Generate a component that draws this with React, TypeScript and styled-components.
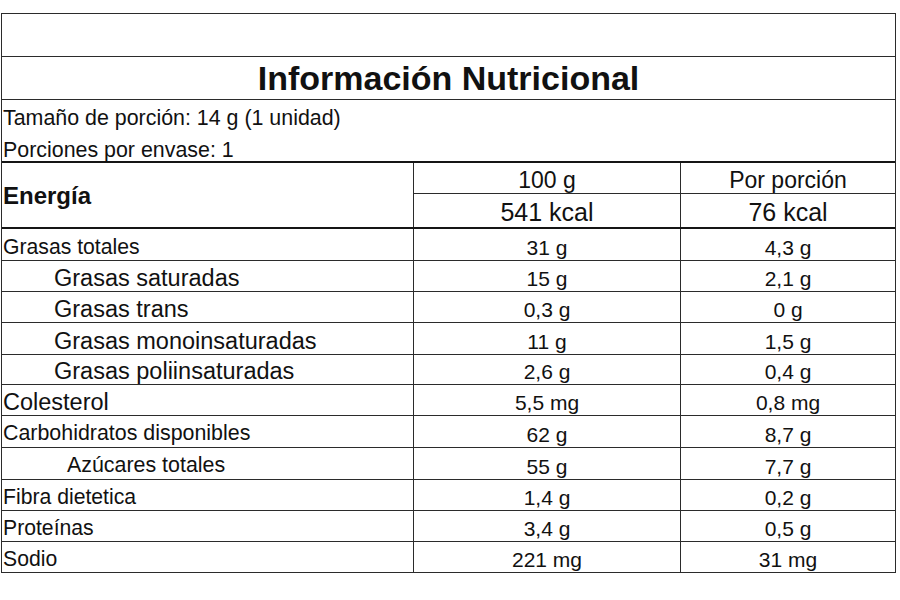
import React from "react";
import styled, { createGlobalStyle } from "styled-components";

const Global = createGlobalStyle`
  *, *::before, *::after { box-sizing: border-box; }
  html, body { margin: 0; padding: 0; background: #ffffff; }
  body { font-family: "Liberation Sans", Arial, Helvetica, sans-serif; color: #111; }
`;

const Page = styled.div`
  padding: 13px 0 0 1px;
`;

const Label = styled.div`
  width: 895px;
  border: 1px solid #2b2b2b;
  border-bottom: none;
`;

const EmptyBand = styled.div`
  height: 43px;
  border-bottom: 1px solid #2b2b2b;
`;

const Title = styled.h1`
  margin: 0;
  height: 43px;
  border-bottom: 1px solid #2b2b2b;
  display: flex;
  align-items: center;
  justify-content: center;
  font-size: 34px;
  line-height: 1;
  font-weight: 700;
`;

const Serving = styled.div`
  height: 63px;
  padding: 2px 0 0 1px;
  border-bottom: 2px solid #151515;
  font-size: 21.4px;
  line-height: 32px;
  overflow: visible;
`;

const ServingLine = styled.div`
  height: 32px;
  white-space: nowrap;
`;

const Grid = styled.div<{ $h: number; $thick?: boolean }>`
  display: grid;
  grid-template-columns: 411px 267px 215px;
  height: ${(p) => p.$h}px;
  border-bottom: ${(p) => (p.$thick ? "2px solid #151515" : "1px solid #2b2b2b")};
`;

const EnergyName = styled.div`
  display: flex;
  align-items: center;
  padding: 2px 0 0 1px;
  font-size: 24px;
  font-weight: 700;
  line-height: 1;
`;

const EnergyCol = styled.div`
  display: grid;
  grid-template-rows: 31px 1fr;
  border-left: 1px solid #2b2b2b;
`;

const EnergyHead = styled.div`
  display: flex;
  align-items: flex-end;
  justify-content: center;
  border-bottom: 1px solid #2b2b2b;
  font-size: 23px;
  line-height: 1.15;
`;

const EnergyValue = styled.div`
  display: flex;
  align-items: flex-end;
  justify-content: center;
  font-size: 25px;
  line-height: 1.15;
`;

const Name = styled.div<{ $size: number; $indent: number }>`
  display: flex;
  align-items: flex-end;
  padding: 0 0 ${(p) => (p.$size > 22 ? 0 : 1)}px ${(p) => p.$indent}px;
  font-size: ${(p) => p.$size}px;
  line-height: ${(p) => (p.$size > 22 ? 1.05 : 1.15)};
  white-space: nowrap;
`;

const Value = styled.div`
  display: flex;
  align-items: flex-end;
  justify-content: center;
  border-left: 1px solid #2b2b2b;
  font-size: 21px;
  line-height: 1.15;
`;

type Row = { name: string; per100: string; perPortion: string; h: number; size: number; indent: number };

const rows: Row[] = [
  { name: "Grasas totales", per100: "31 g", perPortion: "4,3 g", h: 32, size: 21.2, indent: 1 },
  { name: "Grasas saturadas", per100: "15 g", perPortion: "2,1 g", h: 31, size: 23.5, indent: 52 },
  { name: "Grasas trans", per100: "0,3 g", perPortion: "0 g", h: 31, size: 23.5, indent: 52 },
  { name: "Grasas monoinsaturadas", per100: "11 g", perPortion: "1,5 g", h: 32, size: 23.5, indent: 52 },
  { name: "Grasas poliinsaturadas", per100: "2,6 g", perPortion: "0,4 g", h: 30, size: 23.5, indent: 52 },
  { name: "Colesterol", per100: "5,5 mg", perPortion: "0,8 mg", h: 31, size: 23.5, indent: 1 },
  { name: "Carbohidratos disponibles", per100: "62 g", perPortion: "8,7 g", h: 32, size: 21.4, indent: 1 },
  { name: "Azúcares totales", per100: "55 g", perPortion: "7,7 g", h: 32, size: 21.4, indent: 65 },
  { name: "Fibra dietetica", per100: "1,4 g", perPortion: "0,2 g", h: 31, size: 21.2, indent: 1 },
  { name: "Proteínas", per100: "3,4 g", perPortion: "0,5 g", h: 31, size: 21.2, indent: 1 },
  { name: "Sodio", per100: "221 mg", perPortion: "31 mg", h: 31, size: 21.2, indent: 1 },
];

export default function App() {
  return (
    <Page>
      <Global />
      <Label>
        <EmptyBand />
        <Title>Información Nutricional</Title>
        <Serving>
          <ServingLine>Tamaño de porción: 14 g (1 unidad)</ServingLine>
          <ServingLine>Porciones por envase: 1</ServingLine>
        </Serving>
        <Grid $h={66} $thick>
          <EnergyName>Energía</EnergyName>
          <EnergyCol>
            <EnergyHead>100 g</EnergyHead>
            <EnergyValue>541 kcal</EnergyValue>
          </EnergyCol>
          <EnergyCol>
            <EnergyHead>Por porción</EnergyHead>
            <EnergyValue>76 kcal</EnergyValue>
          </EnergyCol>
        </Grid>
        {rows.map((r) => (
          <Grid key={r.name} $h={r.h}>
            <Name $size={r.size} $indent={r.indent}>
              {r.name}
            </Name>
            <Value>{r.per100}</Value>
            <Value>{r.perPortion}</Value>
          </Grid>
        ))}
      </Label>
    </Page>
  );
}
